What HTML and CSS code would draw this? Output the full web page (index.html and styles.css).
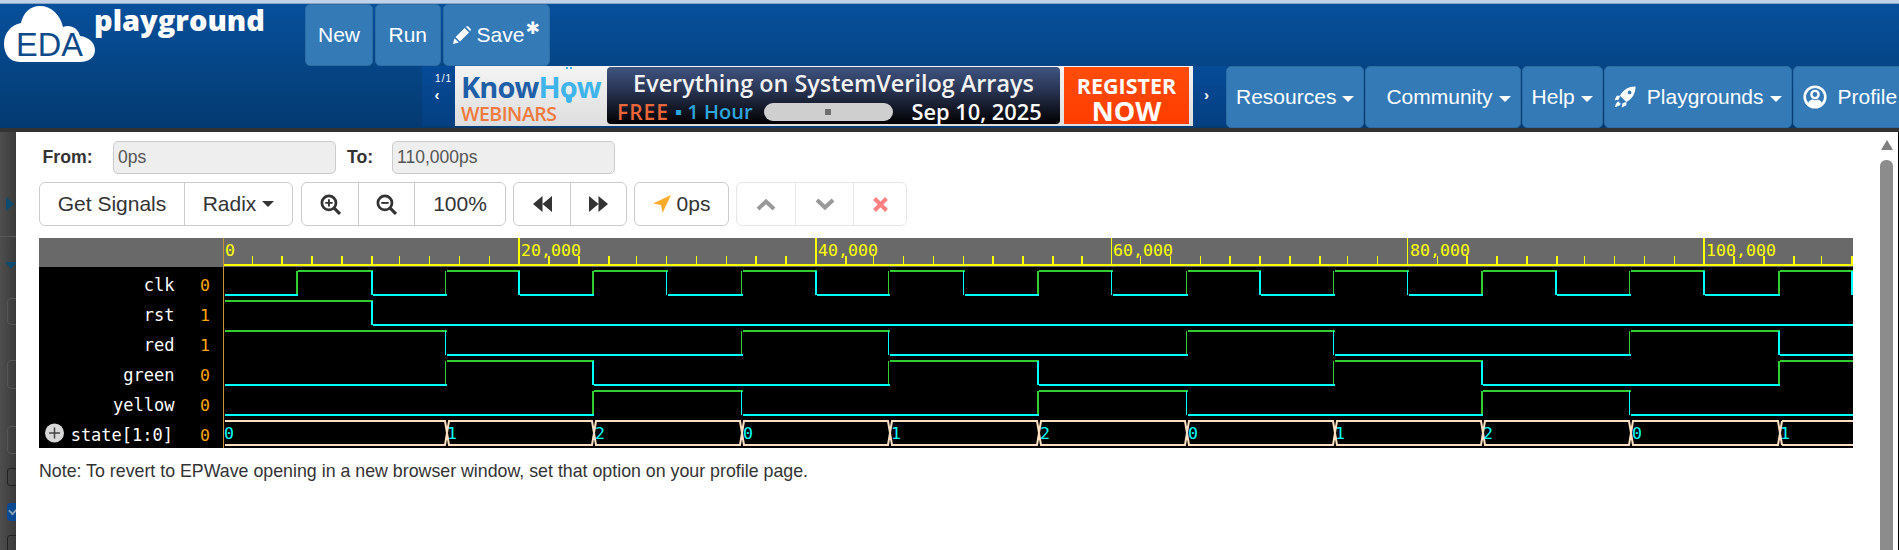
FILE: index.html
```html
<!DOCTYPE html>
<html lang="en">
<head>
    <meta charset="UTF-8">
    <meta name="viewport" content="width=device-width, initial-scale=1.0">
    <title>EDA Playground</title>
    <link rel="stylesheet" href="styles.css">
</head>
<body>
    <header class="topo">
        <div class="linha-cima">
            <div class="logo">
                <svg class="nuvem" width="92" height="57" viewBox="4 6 92 57">
                    <path fill="#fff" d="M20 62C9 62 4 53 4 44C4 33 11 25 21 23C23 13 30 6 40 6C51 6 60 14 63 27C69 24 78 27 80 36C89 37 95 43 95 50C95 58 88 62 80 62Z"/>
                    <text class="nuvem-txt" x="16" y="56">EDA</text>
                </svg>
                <span class="logo-txt">playground</span>
            </div>
            <a class="btn-nav btn-new">New</a>
            <a class="btn-nav btn-run">Run</a>
            <a class="btn-nav btn-save">
                <svg class="ico-lapis" width="18" height="18" viewBox="0 0 18 18"><path fill="#fff" d="M0 18L1.400 12.200L5.800 16.600ZM2.600 11L11.600 2L16 6.400L7 15.400ZM12.800 .8C13.600 0 14.600 0 15.400 .6L17.400 2.600C18 3.400 18 4.400 17.200 5.200Z"/></svg>
                Save<span class="asterisco">✱</span>
            </a>
        </div>
        <div class="linha-baixo">
            <div class="pager">
                <span class="pager-num">1/1</span>
                <span class="pager-seta">‹</span>
            </div>
            <div class="anuncio">
                <div class="ad-marca">
                    <div class="ad-know">Know<span class="ad-how">H<span class="ad-bulbo">o</span>w</span></div>
                    <div class="ad-webinars">WEBINARS</div>
                </div>
                <div class="ad-painel">
                    <div class="ad-titulo">Everything on SystemVerilog Arrays</div>
                    <div class="ad-info">
                        <span class="ad-free">FREE</span>
                        <span class="ad-hora">▪ 1 Hour</span>
                        <span class="ad-pilula"><i></i></span>
                        <span class="ad-data">Sep 10, 2025</span>
                    </div>
                </div>
                <div class="ad-registro">
                    <span class="ad-reg1">REGISTER</span>
                    <span class="ad-reg2">NOW</span>
                </div>
            </div>
            <div class="pager pager-dir"><span class="pager-seta">›</span></div>
            <a class="btn-nav btn-menu">Resources<b class="caret"></b></a>
            <a class="btn-nav btn-menu btn-community">Community<b class="caret"></b></a>
            <a class="btn-nav btn-menu">Help<b class="caret"></b></a>
            <a class="btn-nav btn-menu">
                <svg class="ico-menu" width="22" height="24" viewBox="0 0 24 24"><path fill="#fff" fill-rule="evenodd" d="M23.500 .5C16 .5 10 4 6.500 10.500L13.500 17.500C20 14 23.500 8 23.500 .5ZM17 5A2 2 0 1 1 17 9A2 2 0 1 1 17 5Z"/><path fill="#fff" d="M6.800 10.500H3L.5 15.500L5 15ZM13.500 17.200V21L8.500 23.500L9 19ZM4.500 16.500C2.500 18 1.500 20.500 1 23C3.500 22.500 6 21.500 7.500 19.500Z"/></svg>
                Playgrounds<b class="caret"></b>
            </a>
            <a class="btn-nav btn-menu">
                <svg class="ico-menu ico-perfil" width="24" height="24" viewBox="0 0 24 24"><circle cx="12" cy="12" r="10.300" fill="none" stroke="#fff" stroke-width="2.600"/><circle cx="12" cy="9.500" r="3.600" fill="none" stroke="#fff" stroke-width="2.400"/><path fill="#fff" d="M5 18.500C6 15.500 8 14.500 9.500 14.500C11 15.500 13 15.500 14.500 14.500C16 14.500 18 15.500 19 18.500L16 21H8Z"/></svg>
                Profile<b class="caret"></b>
            </a>
        </div>
    </header>

    <main class="area">
        <!-- pagina atras do modal, escurecida -->
        <div class="fundo">
            <i class="fundo-seta-dir"></i>
            <i class="fundo-linha"></i>
            <i class="fundo-seta-baixo"></i>
            <i class="fundo-campo fundo-c1"></i>
            <i class="fundo-campo fundo-c2"></i>
            <i class="fundo-campo fundo-c3"></i>
            <i class="fundo-check"></i>
            <i class="fundo-check fundo-marcado"></i>
            <i class="fundo-check"></i>
        </div>

        <div class="modal">
            <div class="conteudo">
                <div class="intervalo">
                    <label class="rotulo rotulo-de">From:</label>
                    <div class="campo">0ps</div>
                    <label class="rotulo rotulo-ate">To:</label>
                    <div class="campo">110,000ps</div>
                </div>

                <div class="barra">
                    <div class="grupo grupo-sinais">
                        <a class="btn-tool btn-sinais">Get Signals</a>
                        <a class="btn-tool btn-radix">Radix<b class="caret caret-dark"></b></a>
                    </div>
                    <div class="grupo">
                        <a class="btn-tool btn-ico">
                            <svg width="21" height="21" viewBox="0 0 20 20"><circle cx="8.500" cy="8.500" r="6.700" fill="none" stroke="#333" stroke-width="2.600"/><path stroke="#333" stroke-width="3" d="M13.500 13.500L19 19"/><path stroke="#333" stroke-width="1.800" d="M5 8.500H12M8.500 5V12"/></svg>
                        </a>
                        <a class="btn-tool btn-ico">
                            <svg width="21" height="21" viewBox="0 0 20 20"><circle cx="8.500" cy="8.500" r="6.700" fill="none" stroke="#333" stroke-width="2.600"/><path stroke="#333" stroke-width="3" d="M13.500 13.500L19 19"/><path stroke="#333" stroke-width="1.800" d="M5 8.500H12"/></svg>
                        </a>
                        <a class="btn-tool btn-pct">100%</a>
                    </div>
                    <div class="grupo">
                        <a class="btn-tool btn-ico">
                            <svg width="19" height="16" viewBox="0 0 19 16"><path fill="#333" d="M9.500 0V16L0 8ZM19 0V16L9.500 8Z"/></svg>
                        </a>
                        <a class="btn-tool btn-ico">
                            <svg width="19" height="16" viewBox="0 0 19 16"><path fill="#333" d="M0 0V16L9.500 8ZM9.500 0V16L19 8Z"/></svg>
                        </a>
                    </div>
                    <div class="grupo">
                        <a class="btn-tool btn-cursor">
                            <svg width="18" height="18" viewBox="0 0 18 18"><path fill="#fbab2c" d="M18 0L9.500 18L8 10L0 8.500Z"/></svg>
                            0ps
                        </a>
                    </div>
                    <div class="grupo grupo-off">
                        <a class="btn-tool btn-ico">
                            <svg width="20" height="13" viewBox="0 0 20 13"><path fill="none" stroke="#999" stroke-width="4" d="M2 11L10 3.500L18 11"/></svg>
                        </a>
                        <a class="btn-tool btn-ico">
                            <svg width="20" height="13" viewBox="0 0 20 13"><path fill="none" stroke="#999" stroke-width="4" d="M2 2L10 9.500L18 2"/></svg>
                        </a>
                        <a class="btn-tool btn-ico btn-x">
                            <svg width="15" height="15" viewBox="0 0 15 15"><path fill="none" stroke="#ff8080" stroke-width="4" d="M1.500 1.500L13.500 13.500M13.500 1.500L1.500 13.500"/></svg>
                        </a>
                    </div>
                </div>

                <svg class="onda" width="1814" height="210" viewBox="39 238 1814 210">
                    <rect x="39" y="238" width="1814" height="29" fill="#696969"/>
                    <rect x="39" y="267" width="1814" height="181" fill="#000"/>

                    <!-- regua -->
                    <g class="cr" fill="none" stroke="#ff0">
                        <path stroke-width="2" d="M223 265H1853"/>
                        <path stroke-width="2" d="M282 256V265M312 256V265M342 256V265M372 256V265M519 238V265M549 256V265M579 256V265M609 256V265M756 256V265M786 256V265M816 238V265M846 256V265M993 256V265M1023 256V265M1053 256V265M1082 256V265M1230 256V265M1260 256V265M1290 256V265M1320 256V265M1467 256V265M1497 256V265M1527 256V265M1557 256V265M1704 238V265M1734 256V265M1764 256V265M1794 256V265M1852 256V265"/>
                        <path stroke-width="1" d="M252.500 256V265M399.500 256V265M429.500 256V265M459.500 256V265M489.500 256V265M636.500 256V265M666.500 256V265M696.500 256V265M726.500 256V265M873.500 256V265M903.500 256V265M933.500 256V265M963.500 256V265M1111.500 238V265M1140.500 256V265M1170.500 256V265M1200.500 256V265M1347.500 256V265M1377.500 256V265M1407.500 238V265M1437.500 256V265M1584.500 256V265M1614.500 256V265M1644.500 256V265M1674.500 256V265M1821.500 256V265"/>
                        <path stroke="#c9923a" stroke-width="1" d="M223.500 238V448"/>
                    </g>
                    <g class="regua-txt">
                        <text x="225" y="256">0</text>
                        <text x="521" y="256">20,000</text>
                        <text x="818" y="256">40,000</text>
                        <text x="1113" y="256">60,000</text>
                        <text x="1410" y="256">80,000</text>
                        <text x="1706" y="256">100,000</text>
                    </g>

                    <!-- nomes e valores -->
                    <g class="nomes">
                        <text x="174.500" y="291">clk</text>
                        <text x="174.500" y="321">rst</text>
                        <text x="174.500" y="351">red</text>
                        <text x="174.500" y="381">green</text>
                        <text x="174.500" y="411">yellow</text>
                        <text x="173" y="441">state[1:0]</text>
                    </g>
                    <g class="valores">
                        <text x="200" y="291">0</text>
                        <text x="200" y="321">1</text>
                        <text x="200" y="351">1</text>
                        <text x="200" y="381">0</text>
                        <text x="200" y="411">0</text>
                        <text x="200" y="441">0</text>
                    </g>
                    <circle cx="54.500" cy="433" r="9.500" fill="#d8d8d8"/>
                    <path stroke="#444" stroke-width="1.500" d="M49 433H60M54.500 427.500V438.500"/>

                    <!-- nivel alto -->
                    <g class="cr" fill="none" stroke="#32cd32">
                        <path stroke-width="2" d="M298 271H373M447 271H520M594 271H668M743 271H817M890 271H965M1039 271H1113M1188 271H1261M1335 271H1409M1483 271H1557M1631 271H1705M1780 271H1853M225 301H373M225 331H447M743 331H890M1188 331H1335M1631 331H1780M447 361H594M890 361H1039M1335 361H1483M1780 361H1853M594 391H743M1039 391H1188M1483 391H1631"/>
                        <path stroke-width="2" d="M297 271V295M593 271V295M1038 271V295M1482 271V295M1779 271V295M1779 361V385M593 391V415M1038 391V415M1482 391V415"/>
                        <path stroke-width="1" d="M445.500 271V295M741.500 271V295M888.500 271V295M1186.500 271V295M1333.500 271V295M1629.500 271V295M741.500 331V355M1186.500 331V355M1629.500 331V355M445.500 361V385M888.500 361V385M1333.500 361V385"/>
                    </g>
                    <!-- nivel baixo -->
                    <g class="cr" fill="none" stroke="#0ff">
                        <path stroke-width="2" d="M225 295H298M373 295H447M520 295H594M668 295H743M817 295H890M965 295H1039M1113 295H1188M1261 295H1335M1409 295H1483M1557 295H1631M1705 295H1780M373 325H1853M447 355H743M890 355H1188M1335 355H1631M1780 355H1853M225 385H447M594 385H890M1039 385H1335M1483 385H1780M225 415H594M743 415H1039M1188 415H1483M1631 415H1853"/>
                        <path stroke-width="2" d="M372 271V295M519 271V295M816 271V295M1260 271V295M1556 271V295M1704 271V295M1852 271V295M372 301V325M1779 331V355M593 361V385M1038 361V385M1482 361V385"/>
                        <path stroke-width="1" d="M666.500 271V295M963.500 271V295M1111.500 271V295M1407.500 271V295M445.500 331V355M888.500 331V355M1333.500 331V355M741.500 391V415M1186.500 391V415M1629.500 391V415"/>
                    </g>

                    <!-- barramento state -->
                    <path fill="none" stroke="#ffdfc2" stroke-width="2" d="M225 421H445L447 433L445 445H225M449 421H592L594 433L592 445H449L447 433ZM596 421H740L742 433L740 445H596L594 433ZM744 421H888L890 433L888 445H744L742 433ZM892 421H1037L1039 433L1037 445H892L890 433ZM1041 421H1185L1187 433L1185 445H1041L1039 433ZM1189 421H1333L1335 433L1333 445H1189L1187 433ZM1337 421H1481L1483 433L1481 445H1337L1335 433ZM1485 421H1629L1631 433L1629 445H1485L1483 433ZM1633 421H1778L1780 433L1778 445H1633L1631 433ZM1782 421H1853M1782 445H1853M1782 421L1780 433L1782 445"/>
                    <g class="bus-txt">
                        <text x="224" y="439">0</text>
                        <text x="447" y="439">1</text>
                        <text x="595" y="439">2</text>
                        <text x="743" y="439">0</text>
                        <text x="891" y="439">1</text>
                        <text x="1040" y="439">2</text>
                        <text x="1188" y="439">0</text>
                        <text x="1335" y="439">1</text>
                        <text x="1483" y="439">2</text>
                        <text x="1632" y="439">0</text>
                        <text x="1780" y="439">1</text>
                    </g>
                </svg>

                <p class="nota">Note: To revert to EPWave opening in a new browser window, set that option on your profile page.</p>
            </div>

            <div class="rolagem">
                <i class="rolagem-seta"></i>
                <i class="rolagem-barra"></i>
            </div>
        </div>
    </main>
</body>
</html>
```

FILE: styles.css
```css
* {
    box-sizing: border-box;
}

body {
    margin: 0;
    height: 550px;
    overflow: hidden;
    font-family: "Liberation Sans", Arial, sans-serif;
    color: #333;
    background: #fff;
}

a {
    text-decoration: none;
}

/* topo */
.topo {
    height: 128px;
    padding-top: 4px;
    border-top: 3px solid #c0d2ea;
    background: linear-gradient(to bottom, #07509c, #043a70);
    overflow: hidden;
    box-shadow: inset 0 1px 0 #8aa4c4;
}

.linha-cima {
    display: flex;
    height: 59px;
    gap: 2px;
}

.logo {
    display: flex;
    align-items: flex-start;
    width: 303px;
    padding-left: 4px;
}

.nuvem {
    flex: none;
    margin-top: -1px;
}

.nuvem-txt {
    font-family: "Liberation Sans", Arial, sans-serif;
    font-size: 32.5px;
    fill: #0f4a88;
}

.logo-txt {
    margin: -7px 0 0 -2px;
    font-family: "Open Sans", sans-serif;
    font-size: 29px;
    font-weight: 800;
    color: #fff;
    line-height: 40px;
}

.btn-nav {
    display: flex;
    align-items: center;
    flex: none;
    font-size: 21px;
    color: #fff;
    background: #337ab7;
    border: 1px solid #2e6da4;
    border-radius: 5px;
}

.linha-cima .btn-nav {
    margin-top: -3px;
    height: 62px;
}

.btn-new {
    padding: 0 12px;
}

.btn-run {
    padding: 0 12.5px;
}

.btn-save {
    padding: 0 9px;
}

.ico-lapis {
    margin-right: 6px;
}

.asterisco {
    align-self: flex-start;
    margin: 13px 0 0 1px;
    font-family: "DejaVu Sans", sans-serif;
    font-size: 17px;
    font-weight: bold;
    line-height: 20px;
}

.linha-baixo {
    display: flex;
    height: 62px;
    margin-left: 422px;
    width: 1477px;
}

.pager {
    flex: none;
    width: 33px;
    height: 60px;
    color: #fff;
    background: linear-gradient(to bottom, #064b98, #043f80);
    text-align: center;
}

.pager-num {
    display: block;
    padding: 6px 3px 0 0;
    font-size: 10px;
    line-height: 13px;
    letter-spacing: 1px;
    text-align: right;
}

.pager-seta {
    display: block;
    margin-top: -1px;
    padding-right: 3px;
    font-size: 15px;
    line-height: 22px;
    font-weight: bold;
}

.pager-dir .pager-seta {
    margin-top: 18px;
    padding: 0 6px 0 0;
}

/* banner */
.anuncio {
    display: flex;
    flex: none;
    width: 738px;
    height: 60px;
    padding: 1px 4px 2px 6px;
    background: linear-gradient(to bottom, #f4f4f4, #dedede);
    font-family: "Open Sans", sans-serif;
}

.ad-marca {
    width: 146px;
}

.ad-know {
    margin-top: 4px;
    font-size: 29px;
    font-weight: 700;
    line-height: 32px;
    letter-spacing: -0.9px;
    color: #1f5fa8;
}

.ad-how {
    color: #3eb4ea;
}

/* a lampada no lugar do o */
.ad-bulbo {
    position: relative;
}

.ad-bulbo::before {
    content: "";
    position: absolute;
    left: 6px;
    top: 0;
    width: 6px;
    height: 3px;
    border-top: 2px dotted #3eb4ea;
}

.ad-bulbo::after {
    content: "";
    position: absolute;
    left: 6px;
    bottom: 3px;
    width: 6px;
    height: 6px;
    border-radius: 0 0 3px 3px;
    background: #3eb4ea;
}

.ad-webinars {
    font-size: 19.5px;
    font-weight: 600;
    line-height: 21px;
    letter-spacing: -0.5px;
    color: #ef7a3f;
}

.ad-painel {
    width: 453px;
    padding: 0 10px;
    border-radius: 4px;
    background: linear-gradient(to bottom, #3f5480, #2a3554 40%, #000);
    color: #fff;
}

.ad-titulo {
    font-size: 23.4px;
    font-weight: 600;
    line-height: 32px;
    text-align: center;
    color: #f2f2f2;
    white-space: nowrap;
}

.ad-info {
    display: flex;
    align-items: center;
    height: 25px;
    white-space: nowrap;
}

.ad-free {
    font-size: 21px;
    font-weight: 600;
    letter-spacing: 1px;
    color: #e8663a;
}

.ad-hora {
    margin-left: 6px;
    font-size: 20px;
    font-weight: 600;
    color: #2ca5dc;
}

.ad-pilula {
    display: flex;
    align-items: center;
    justify-content: center;
    flex: none;
    width: 129px;
    height: 18px;
    margin-left: 11px;
    border-radius: 9px;
    background: #cfcfcf;
}

.ad-pilula i {
    display: block;
    width: 6px;
    height: 6px;
    background: #6e6e6e;
}

.ad-data {
    margin-left: 19px;
    font-size: 21.8px;
    font-weight: 600;
}

.ad-registro {
    display: flex;
    flex-direction: column;
    align-items: center;
    width: 125px;
    margin-left: 4px;
    color: #fff;
    font-weight: 700;
    background: linear-gradient(to bottom, #ff4d0a, #ff3d00);
}

.ad-reg1 {
    margin-top: 6px;
    font-size: 21.5px;
    line-height: 26px;
}

.ad-reg2 {
    font-size: 27px;
    line-height: 24px;
}

/* menu */
.btn-menu {
    height: 62px;
    padding: 0 9px;
    margin-right: 1px;
}

.btn-community {
    padding-left: 20px;
}

.ico-menu {
    margin-right: 11px;
}

.caret {
    display: inline-block;
    width: 0;
    height: 0;
    margin-left: 6px;
    margin-top: 3px;
    border-top: 6px solid #fff;
    border-left: 6px solid transparent;
    border-right: 6px solid transparent;
}

.caret-dark {
    border-top-color: #333;
}

/* area de baixo */
.area {
    display: flex;
    height: 422px;
    border-top: 4px solid #333;
}

.fundo {
    display: flex;
    flex-direction: column;
    flex: none;
    width: 16px;
    background: linear-gradient(to right, #4e4e4e, #3a3a3a);
    overflow: hidden;
}

.fundo i {
    display: block;
    flex: none;
}

.fundo-seta-dir {
    width: 0;
    height: 0;
    margin: 65px 0 0 6px;
    border-left: 8px solid #0c4a6e;
    border-top: 7px solid transparent;
    border-bottom: 7px solid transparent;
}

.fundo-linha {
    width: 16px;
    height: 1px;
    margin-top: 25px;
    background: #5a5a5a;
}

.fundo-seta-baixo {
    width: 0;
    height: 0;
    margin: 25px 0 0 5px;
    border-top: 7px solid #0c4a6e;
    border-left: 6px solid transparent;
    border-right: 6px solid transparent;
}

.fundo-campo {
    width: 20px;
    border: 1px solid #555;
    border-radius: 4px;
    margin-left: 7px;
}

.fundo-c1 {
    height: 27px;
    margin-top: 29px;
}

.fundo-c2 {
    height: 29px;
    margin-top: 35px;
}

.fundo-c3 {
    height: 28px;
    margin-top: 37px;
}

.fundo-check {
    width: 20px;
    height: 18px;
    margin: 14px 0 0 7px;
    border: 1.500px solid #222;
    border-radius: 3px;
}

.fundo-marcado {
    position: relative;
    margin-top: 17px;
    background: #0b4a91;
    border-color: #0b4a91;
}

.fundo-marcado::after {
    content: "";
    position: absolute;
    left: 1px;
    top: 3px;
    width: 7px;
    height: 4px;
    border-left: 2px solid #8d9db5;
    border-bottom: 2px solid #8d9db5;
    transform: rotate(-45deg);
}

.modal {
    display: flex;
    flex: 1;
    background: #fff;
    border-right: 1px solid #000;
}

.conteudo {
    width: 1864px;
    padding: 9px 0 0 23px;
}

.intervalo {
    display: flex;
    align-items: center;
    height: 33px;
}

.rotulo {
    font-size: 17.7px;
    font-weight: bold;
}

.rotulo-de {
    width: 74px;
    padding-left: 3.500px;
}

.rotulo-ate {
    width: 56px;
    padding-left: 11px;
}

.campo {
    width: 223px;
    height: 33px;
    padding-left: 4px;
    font-size: 17.5px;
    line-height: 31px;
    color: #555;
    background: #eee;
    border: 1px solid #ccc;
    border-radius: 5px;
}

.barra {
    display: flex;
    gap: 7px;
    margin-top: 8px;
}

.grupo {
    display: flex;
    height: 44px;
    border: 1px solid #ccc;
    border-radius: 6px;
}

.grupo-sinais {
    margin-right: 1px;
}

.btn-tool {
    display: flex;
    align-items: center;
    justify-content: center;
    height: 42px;
    font-size: 21px;
    color: #333;
    border-left: 1px solid #ccc;
}

.btn-tool:first-child {
    border-left: none;
}

.btn-sinais {
    width: 144px;
}

.btn-radix {
    width: 108px;
}

.btn-ico {
    width: 56px;
}

.btn-pct {
    width: 91px;
}

.btn-radix .caret {
    margin-top: 0;
    margin-left: 6px;
}

.btn-cursor {
    gap: 6px;
    width: 93px;
}

.grupo-off {
    border-color: #e6e6e6;
}

.grupo-off .btn-tool {
    width: 58px;
    border-left-color: #e6e6e6;
}

.grupo-off .btn-x {
    width: 53px;
}

.onda {
    display: block;
    margin-top: 12px;
}

.cr {
    shape-rendering: crispEdges;
}

.onda text {
    font-family: "DejaVu Sans Mono", monospace;
    font-size: 16.6px;
}

.regua-txt text {
    fill: #ff0;
}

.onda .nomes text {
    font-size: 17px;
    fill: #fff;
    text-anchor: end;
}

.valores text {
    fill: #ffa500;
}

.bus-txt text {
    fill: #0ff;
}

.nota {
    margin: 11px 0 0;
    font-size: 17.8px;
    line-height: 25px;
}

.rolagem {
    display: flex;
    flex-direction: column;
    align-items: center;
    flex: none;
    width: 13px;
    padding-top: 8px;
}

.rolagem i {
    display: block;
    flex: none;
}

.rolagem-seta {
    width: 0;
    height: 0;
    border-bottom: 10px solid #808080;
    border-left: 6.500px solid transparent;
    border-right: 6.500px solid transparent;
}

.rolagem-barra {
    width: 13px;
    height: 400px;
    margin-top: 10px;
    background: #8c8c8c;
    border-radius: 6px 6px 0 0;
}
```
